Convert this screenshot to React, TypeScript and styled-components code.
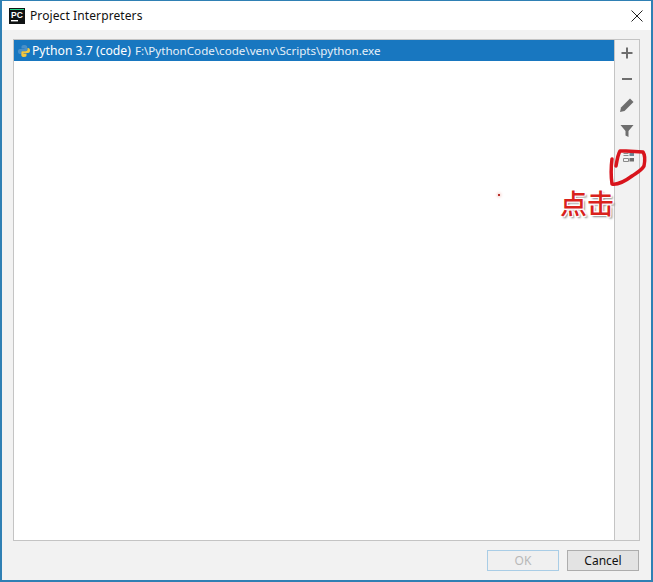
import React from "react";
import styled, { createGlobalStyle } from "styled-components";

const Global = createGlobalStyle`
  html, body { margin: 0; padding: 0; background: #fff; }
  body { font-family: "Open Sans", "Noto Sans", "Liberation Sans", sans-serif; }
`;

const Window = styled.div`
  position: relative;
  box-sizing: border-box;
  width: 653px;
  height: 582px;
  border: 2px solid #2f80b4;
  border-top-width: 1px;
  border-bottom-width: 2px;
  display: flex;
  flex-direction: column;
  background: #f2f2f2;
  overflow: hidden;
`;

const TitleBar = styled.div`
  height: 29px;
  flex: none;
  background: #fff;
  display: flex;
  align-items: center;
  padding: 0 8px 0 7px;
  gap: 5px;
`;

const TitleText = styled.span`
  flex: 1;
  font-family: "Noto Sans", "Open Sans", sans-serif;
  font-size: 12px;
  color: #111;
  letter-spacing: 0.1px;
`;

const Body = styled.div`
  flex: 1;
  min-height: 0;
  display: flex;
  margin: 9px 11px 0 11px;
  border: 1px solid #c4c4c4;
`;

const List = styled.div`
  flex: 1;
  background: #fff;
  border-right: 1px solid #c4c4c4;
`;

const Row = styled.div`
  height: 21px;
  background: #1877c0;
  color: #fff;
  display: flex;
  align-items: center;
  padding-left: 3px;
  gap: 1px;
  font-family: "Noto Sans", "Open Sans", sans-serif;
  font-size: 12.2px;
  white-space: nowrap;
`;

const Name = styled.span`
  margin-right: 3px;
`;

const Path = styled.span`
  font-size: 11.6px;
  color: #e6f0f8;
`;

const Tools = styled.div`
  width: 24px;
  flex: none;
  background: #f2f2f2;
  display: flex;
  flex-direction: column;
  align-items: center;
`;

const ToolSlot = styled.div`
  width: 24px;
  height: 26px;
  flex: none;
  display: flex;
  align-items: center;
  justify-content: center;
`;

const Footer = styled.div`
  height: 39px;
  flex: none;
  display: flex;
  justify-content: flex-end;
  align-items: flex-start;
  gap: 8px;
  padding: 9px 12px 0 0;
  box-sizing: border-box;
`;

const Button = styled.div<{ $disabled?: boolean }>`
  box-sizing: border-box;
  width: 72px;
  height: 21px;
  display: flex;
  align-items: center;
  justify-content: center;
  font-family: "Noto Sans", "Open Sans", sans-serif;
  font-size: 12px;
  color: ${(p) => (p.$disabled ? "#b8b8b8" : "#111")};
  background: ${(p) => (p.$disabled ? "#f0f0f0" : "#e3e3e3")};
  border: 1px solid ${(p) => (p.$disabled ? "#a9cde6" : "#adadad")};
`;

const Scribble = styled.svg`
  position: absolute;
  left: 600px;
  top: 140px;
  width: 46px;
  height: 50px;
`;

const Note = styled.span`
  position: absolute;
  left: 558px;
  top: 184px;
  font-family: "Noto Sans CJK SC", sans-serif;
  font-size: 27px;
  font-weight: 500;
  line-height: 36px;
  color: #d9221c;
  text-shadow: 1px 1px 0 #fff, -1px -1px 0 #fff, 1px -1px 0 #fff, -1px 1px 0 #fff, 2px 2px 2px #888;
`;

const Dot = styled.i`
  position: absolute;
  left: 496px;
  top: 193px;
  width: 2px;
  height: 2px;
  background: #b8322c;
  box-shadow: 0 0 3px 1px #f6d3cf;
`;

const PcLogo = () => (
  <svg width="16" height="16" viewBox="0 0 16 16">
    <rect width="16" height="16" fill="#101314" />
    <rect x="2" y="12" width="7" height="1.4" fill="#fff" />
    <rect x="1" y="1" width="14" height="1" fill="#21d789" />
    <text x="2" y="9.5" fontFamily="Liberation Sans" fontWeight="700" fontSize="8.5" fill="#fff">PC</text>
  </svg>
);

const PythonIcon = () => (
  <svg width="14" height="14" viewBox="0 0 14 14">
    <path d="M7 1C4.600 1 4.500 2 4.500 3v1.500H7.500V5H3C1.500 5 1 6.300 1 7.500S1.500 10 3 10h1V8.500C4 7.500 5 7 6 7h3c.8 0 1.200-.6 1.200-1.200V3C10.200 1.600 8.600 1 7 1z" fill="#4a90c8" />
    <path d="M7 13c2.400 0 2.500-1 2.500-2V9.500H6.500V9H11c1.500 0 2-1.300 2-2.500S12.500 4 11 4h-.5v1.500c0 1-1 1.700-2 1.700H5.500c-.8 0-1.200.6-1.200 1.200V11c0 1.400 1.100 2 2.700 2z" fill="#f4c63d" />
  </svg>
);

export default function App() {
  return (
    <>
      <Global />
      <Window>
        <TitleBar>
          <PcLogo />
          <TitleText>Project Interpreters</TitleText>
          <svg width="12" height="12" viewBox="0 0 12 12">
            <path d="M.5.500l11 11M11.500.500l-11 11" stroke="#222" strokeWidth="1" fill="none" />
          </svg>
        </TitleBar>
        <Body>
          <List>
            <Row>
              <PythonIcon />
              <Name>Python 3.7 (code)</Name>
              <Path>F:\PythonCode\code\venv\Scripts\python.exe</Path>
            </Row>
          </List>
          <Tools>
            <ToolSlot>
              <svg width="12" height="12" viewBox="0 0 12 12">
                <path d="M6 .5v11M.5 6h11" stroke="#6e6e6e" strokeWidth="2" />
              </svg>
            </ToolSlot>
            <ToolSlot>
              <svg width="12" height="12" viewBox="0 0 12 12">
                <path d="M1 6h10" stroke="#6e6e6e" strokeWidth="2" />
              </svg>
            </ToolSlot>
            <ToolSlot>
              <svg width="16" height="16" viewBox="0 0 16 16">
                <path d="M1 15l1-4.500L11 1.500 14.500 5l-9 9z" fill="#6e6e6e" />
              </svg>
            </ToolSlot>
            <ToolSlot>
              <svg width="14" height="14" viewBox="0 0 14 14">
                <path d="M.5 1h13L8.500 7v6l-3-1.500V7z" fill="#6e6e6e" />
              </svg>
            </ToolSlot>
            <ToolSlot>
              <svg width="16" height="10" viewBox="0 0 16 10">
                <path d="M4.500 1.500h5M4.500 3.500h5M4.500 6.500h5v3h-5z" stroke="#8a8a8a" fill="none" />
                <rect x="10.500" y="1" width="4.500" height="3" fill="#6d8896" />
                <rect x="10.500" y="6" width="4.500" height="3.500" fill="#6e6e6e" />
              </svg>
            </ToolSlot>
          </Tools>
        </Body>
        <Footer>
          <Button $disabled>OK</Button>
          <Button>Cancel</Button>
        </Footer>
        <Scribble viewBox="0 0 46 50">
          <path
            d="M10 18C9 26 9 36 10 43C16 44 22 41 30 35C34 32 39 30 42 25C43 20 43 14 41 11L24 10L18 10C16 13 15 19 14 25"
            fill="none"
            stroke="#d8141c"
            strokeWidth="3.500"
            strokeLinecap="round"
            strokeLinejoin="round"
          />
        </Scribble>
        <Note>点击</Note>
        <Dot />
      </Window>
    </>
  );
}
